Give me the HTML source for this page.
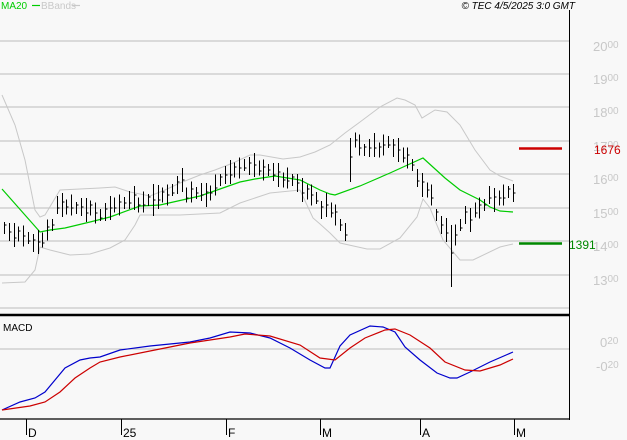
<!DOCTYPE html>
<html><head><meta charset="utf-8">
<style>
html,body{margin:0;padding:0;background:#f8f8f8;}
body{width:627px;height:440px;overflow:hidden;position:relative;font-family:"Liberation Sans",sans-serif;}
svg{position:absolute;left:0;top:0;}
.lbl{font-size:13px;fill:#c8c8c8;}
.sm{font-size:10px;}
</style></head><body>
<svg width="627" height="440" viewBox="0 0 627 440" xmlns="http://www.w3.org/2000/svg">
<g stroke="#c8c8c8" stroke-width="1.2" fill="none">
<line x1="0" y1="41" x2="569" y2="41"/><line x1="0" y1="74" x2="569" y2="74"/>
<line x1="0" y1="107" x2="569" y2="107"/><line x1="0" y1="141" x2="569" y2="141"/>
<line x1="0" y1="174" x2="569" y2="174"/><line x1="0" y1="208" x2="569" y2="208"/>
<line x1="0" y1="241" x2="569" y2="241"/><line x1="0" y1="275" x2="569" y2="275"/>
<line x1="0" y1="308" x2="569" y2="308"/><line x1="0" y1="349" x2="569" y2="349"/>
</g>
<g stroke="#c8c8c8" stroke-width="1" fill="none">
<polyline points="2,95 15,125 25,160 35,210 40,217 45,215 60,190 100,188 115,187 130,192 150,196 165,190 180,183 200,175 215,170 233,163 250,155 260,155 283,159 300,157 315,152 330,145 345,133 360,122 380,107 397,98 405,100 415,105 422,118 435,110 447,112 460,125 475,150 490,170 500,176 513,181"/>
<polyline points="2,283 25,282 35,270 40,247 50,250 70,255 90,254 110,248 125,240 135,225 140,215 180,215 220,213 240,203 270,193 300,190 313,218 320,224 330,233 340,243 367,249 380,249 400,238 417,217 423,199 430,208 443,240 460,260 473,260 500,247 513,244"/>
</g>
<polyline fill="none" stroke="#00cc00" stroke-width="1.2" points="2,189 40,232 50,230 65,228 90,222 110,217 140,206 160,205 200,196 240,182 255,179 275,176 300,180 320,190 330,194 335,195 360,186 390,173 423,158 445,178 460,190 480,200 490,207 500,211 513,212"/>
<g id="bars" stroke="#000" stroke-width="1" fill="none"></g>
<line x1="519" y1="148.5" x2="562" y2="148.5" stroke="#cc0000" stroke-width="2.5"/>
<line x1="519" y1="243.5" x2="562" y2="243.5" stroke="#008800" stroke-width="2.5"/>
<polyline fill="none" stroke="#0000cc" stroke-width="1.2" points="2,410 20,402 35,398 45,392 55,380 65,368 80,360 90,358 100,357 120,350 150,346 190,342 210,338 230,332 250,333 270,338 290,348 310,360 325,368 330,368 340,346 350,335 370,326 383,327 395,332 405,347 420,360 437,373 450,378 457,378 470,372 490,362 513,352"/>
<polyline fill="none" stroke="#cc0000" stroke-width="1.2" points="2,410 30,406 45,402 60,392 75,378 90,368 100,362 120,357 150,351 190,343 230,337 245,334 270,336 300,345 320,358 335,360 350,348 365,338 385,330 395,329 410,335 430,348 445,362 465,370 480,371 500,365 513,359"/>
<line x1="569.5" y1="10" x2="569.5" y2="420" stroke="#000" stroke-width="1"/>
<line x1="0" y1="315" x2="570" y2="315" stroke="#000" stroke-width="2.5"/>
<line x1="0" y1="419" x2="570" y2="419" stroke="#000" stroke-width="1.2"/>
<g stroke="#000" stroke-width="1"><line x1="26.5" y1="419" x2="26.5" y2="435"/><line x1="121.5" y1="419" x2="121.5" y2="435"/><line x1="226.5" y1="419" x2="226.5" y2="435"/><line x1="320.5" y1="419" x2="320.5" y2="435"/><line x1="420.5" y1="419" x2="420.5" y2="435"/><line x1="514.5" y1="419" x2="514.5" y2="435"/></g>
<g font-size="12" fill="#000"><text x="28" y="437">D</text><text x="123" y="437">25</text><text x="228" y="437">F</text><text x="322" y="437">M</text><text x="422" y="437">A</text><text x="516" y="437">M</text></g>
<text x="1" y="9" font-size="10" fill="#00cc00">MA20</text>
<line x1="32" y1="5.5" x2="40" y2="5.5" stroke="#00cc00" stroke-width="1.2"/>
<text x="41" y="9" font-size="10" fill="#c8c8c8">BBands</text>
<line x1="72" y1="5.5" x2="80" y2="5.5" stroke="#c8c8c8" stroke-width="1.2"/>
<text x="575" y="9" font-size="10" font-style="italic" text-anchor="end" fill="#000">© TEC 4/5/2025 3:0 GMT</text>
<text x="3" y="331" font-size="10" fill="#000">MACD</text>
<g class="lbl">
<text x="593" y="51">20<tspan class="sm" dy="-3">00</tspan></text>
<text x="593" y="84">19<tspan class="sm" dy="-3">00</tspan></text>
<text x="593" y="117">18<tspan class="sm" dy="-3">00</tspan></text>
<text x="593" y="151">17<tspan class="sm" dy="-3">00</tspan></text>
<text x="593" y="184">16<tspan class="sm" dy="-3">00</tspan></text>
<text x="593" y="218">15<tspan class="sm" dy="-3">00</tspan></text>
<text x="593" y="251">14<tspan class="sm" dy="-3">00</tspan></text>
<text x="593" y="285">13<tspan class="sm" dy="-3">00</tspan></text>
<text x="600" y="347">0<tspan class="sm" dy="-3">20</tspan></text>
<text x="596" y="371">-0<tspan class="sm" dy="-3">20</tspan></text>
</g>
<text x="594" y="154" font-size="12" fill="#cc0000">1676</text>
<text x="569" y="249" font-size="12" fill="#008800">1391</text>
</svg>
<script>
var mids=[228,232,235,234,236,238,243,242,240,230,225,205,205,207,205,208,207,210,208,213,215,212,208,205,205,203,200,198,205,202,200,200,197,195,195,190,185,180,195,192,193,192,195,193,185,180,175,172,170,168,165,166,165,168,170,170,172,175,180,178,180,183,190,192,195,198,210,205,210,215,225,232,160,140,145,150,148,145,150,145,142,148,150,155,158,165,178,185,190,195,215,225,230,256,235,225,215,220,210,208,205,195,200,198,195,192,193];
var n=mids.length,g=document.getElementById('bars'),s='';
for(var i=0;i<n;i++){var x=4+i*(509/(n-1));var m=mids[i];var h=6+((i*7)%5)*1.5;if(i==93)h=31;if(i==72)h=22;if(i==31)h=16;
var xr=Math.round(x)+0.5;var c=m+((i%3)-1)*3;
s+='<line x1="'+xr+'" y1="'+(m-h)+'" x2="'+xr+'" y2="'+(m+h)+'"/><line x1="'+xr+'" y1="'+c+'" x2="'+(xr+2)+'" y2="'+c+'"/>';}
g.innerHTML=s;
</script>
</body></html>
